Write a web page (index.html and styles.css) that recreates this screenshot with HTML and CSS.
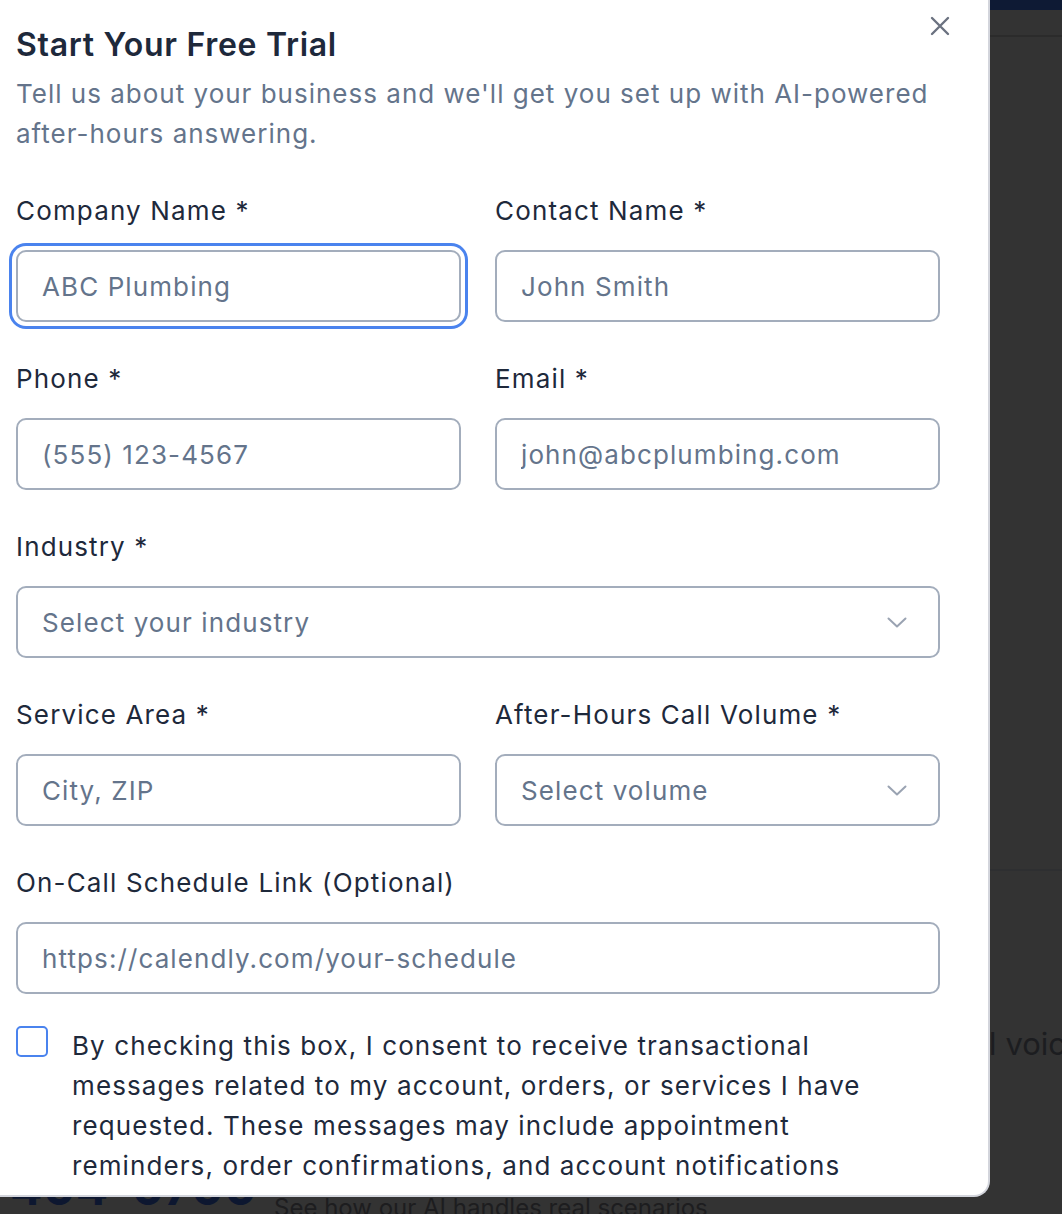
FILE: index.html
```html
<!DOCTYPE html>
<html lang="en">
<head>
<meta charset="utf-8">
<title>Start Your Free Trial</title>
<link rel="stylesheet" href="styles.css">
</head>
<body>
<div class="backdrop" aria-hidden="true">
  <div class="bg-topbar"></div>
  <div class="bg-line bg-line-1"></div>
  <div class="bg-line bg-line-2"></div>
  <div class="bg-strip bg-strip-voice"><span class="bg-voice">AI voice</span></div>
  <div class="bg-strip bg-strip-bottom">
    <span class="bg-phone">404-0700</span>
    <span class="bg-see">See how our AI handles real scenarios</span>
  </div>
</div>

<div class="modal" role="dialog" aria-labelledby="trial-title">
  <button class="close" type="button" aria-label="Close">
    <svg width="20" height="20" viewBox="0 0 20 20" fill="none" stroke="currentColor" stroke-width="2.4" stroke-linecap="round"><path d="M2 2 L18 18 M18 2 L2 18"/></svg>
  </button>
  <h2 class="title" id="trial-title">Start Your Free Trial</h2>
  <p class="subtitle">Tell us about your business and we'll get you set up with AI-powered after-hours answering.</p>

  <form class="form">
    <div class="field">
      <label class="label">Company Name *</label>
      <input class="input focused" type="text" placeholder="ABC Plumbing">
    </div>
    <div class="field">
      <label class="label">Contact Name *</label>
      <input class="input" type="text" placeholder="John Smith">
    </div>
    <div class="field">
      <label class="label">Phone *</label>
      <input class="input" type="text" placeholder="(555) 123-4567">
    </div>
    <div class="field">
      <label class="label">Email *</label>
      <input class="input" type="text" placeholder="john@abcplumbing.com">
    </div>
    <div class="field full">
      <label class="label">Industry *</label>
      <div class="select">
        <span class="select-text">Select your industry</span>
        <svg class="chev" width="20" height="11" viewBox="0 0 20 11" fill="none" stroke="currentColor" stroke-width="2" stroke-linecap="round" stroke-linejoin="round"><path d="M1.5 1.5 L10 9.5 L18.5 1.5"/></svg>
      </div>
    </div>
    <div class="field">
      <label class="label">Service Area *</label>
      <input class="input" type="text" placeholder="City, ZIP">
    </div>
    <div class="field">
      <label class="label">After-Hours Call Volume *</label>
      <div class="select">
        <span class="select-text">Select volume</span>
        <svg class="chev" width="20" height="11" viewBox="0 0 20 11" fill="none" stroke="currentColor" stroke-width="2" stroke-linecap="round" stroke-linejoin="round"><path d="M1.5 1.5 L10 9.5 L18.5 1.5"/></svg>
      </div>
    </div>
    <div class="field full">
      <label class="label">On-Call Schedule Link (Optional)</label>
      <input class="input" type="text" placeholder="https://calendly.com/your-schedule">
    </div>
    <div class="consent full">
      <span class="checkbox"></span>
      <p class="consent-text">By checking this box, I consent to receive transactional messages related to my account, orders, or services I have requested. These messages may include appointment reminders, order confirmations, and account notifications</p>
    </div>
  </form>
</div>
</body>
</html>
```

FILE: styles.css
```css
* { box-sizing: border-box; }

html, body {
  margin: 0;
  padding: 0;
  height: 100%;
}

body {
  background: #333333;
  font-family: Inter, "Noto Sans", "Liberation Sans", sans-serif;
  overflow: hidden;
  position: relative;
}

/* page behind the overlay */
.backdrop {
  position: absolute;
  inset: 0;
  z-index: 0;
}
.bg-topbar {
  position: absolute;
  left: 0; right: 0; top: 0;
  height: 10px;
  background: #0e1a34;
}
.bg-line {
  position: absolute;
  left: 0; right: 0;
  height: 2px;
  background: #2b2b2b;
}
.bg-line-1 { top: 35px; }
.bg-line-2 { top: 869px; background: #2e2f31; }

.bg-strip {
  position: absolute;
  overflow: hidden;
}
.bg-strip-voice {
  left: 990px;
  right: 0;
  top: 1024px;
  height: 44px;
}
.bg-voice {
  position: absolute;
  left: -23px;
  top: 0;
  font-size: 31px;
  line-height: 40px;
  color: #1c1d20;
  white-space: nowrap;
}
.bg-strip-bottom {
  left: 0;
  right: 0;
  top: 1197px;
  bottom: 0;
}
.bg-phone {
  position: absolute;
  left: 10px;
  top: -33px;
  font-size: 48px;
  font-weight: 700;
  line-height: 48px;
  color: #0d1730;
  white-space: nowrap;
  letter-spacing: 0.5px;
}
.bg-see {
  position: absolute;
  left: 274px;
  top: -4px;
  font-size: 24px;
  line-height: 30px;
  color: #1d1d1f;
  white-space: nowrap;
}

/* modal */
.modal {
  position: relative;
  z-index: 1;
  width: 990px;
  height: 1197px;
  background: #ffffff;
  border-right: 2px solid #d3d5dc;
  border-bottom: 2px solid #d3d5dc;
  border-bottom-right-radius: 16px;
  padding: 22px 48px 0 16px;
  overflow: hidden;
}

.close {
  position: absolute;
  top: 16px;
  left: 930px;
  width: 20px;
  height: 20px;
  padding: 0;
  border: 0;
  background: none;
  color: #6b7280;
  display: flex;
}

.title {
  margin: 0;
  font-size: 32px;
  line-height: 46px;
  font-weight: 600;
  color: #1e293b;
  letter-spacing: 0.7px;
}

.subtitle {
  margin: 6px 0 0;
  font-size: 26px;
  line-height: 40px;
  color: #64748b;
  letter-spacing: 1px;
}

.form {
  margin-top: 37px;
  display: grid;
  grid-template-columns: 1fr 1fr;
  column-gap: 34px;
  row-gap: 37px;
}

.field {
  display: flex;
  flex-direction: column;
}
.full { grid-column: 1 / -1; }

.label {
  font-size: 26px;
  line-height: 40px;
  color: #1e293b;
  margin-bottom: 19px;
  letter-spacing: 1.15px;
}

.input, .select {
  height: 72px;
  width: 100%;
  border: 2px solid #a3adbc;
  border-radius: 10px;
  background: #fff;
  font-family: inherit;
  font-size: 26px;
  letter-spacing: 1.1px;
  color: #1e293b;
  padding: 0 24px;
  outline: none;
}
.input::placeholder { color: #64748b; opacity: 1; }

.input.focused {
  box-shadow: 0 0 0 4px #ffffff, 0 0 0 7px #4a83ee;
}

.select {
  display: flex;
  align-items: center;
  justify-content: space-between;
  padding-right: 31px;
}
.select-text { color: #64748b; }
.chev { color: #9aa3b2; display: block; }

.consent {
  display: flex;
  align-items: flex-start;
  gap: 24px;
  margin-top: -5px;
}
.checkbox {
  flex: none;
  width: 32px;
  height: 31px;
  border: 2px solid #4a83ee;
  border-radius: 5px;
  background: #fff;
}
.consent-text {
  margin: 0;
  padding-right: 8px;
  font-size: 26px;
  line-height: 40px;
  color: #1e293b;
  letter-spacing: 1.1px;
}
```
